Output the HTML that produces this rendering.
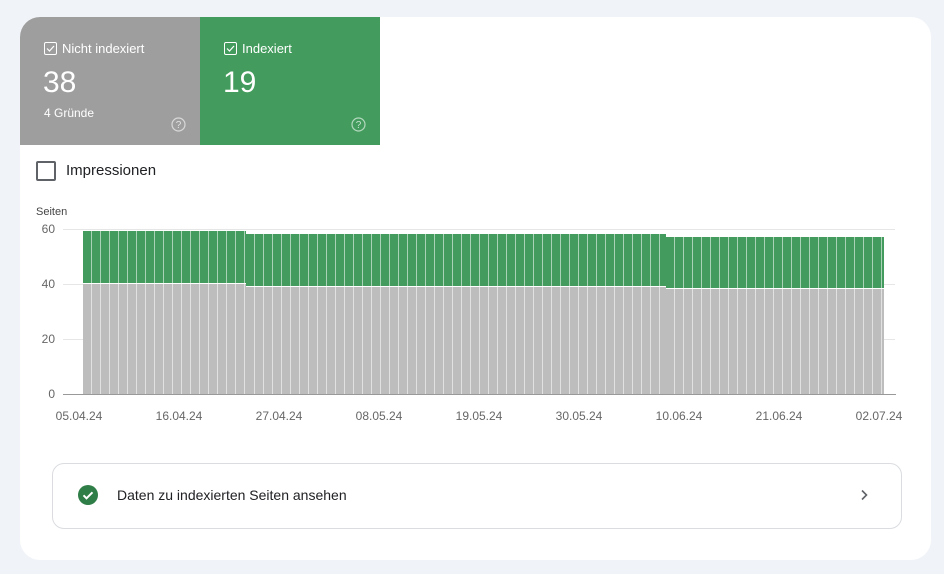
<!DOCTYPE html>
<html><head><style>
body{margin:0;width:944px;height:574px;background:#f0f3f8;font-family:"Liberation Sans",sans-serif;position:relative;overflow:hidden}
.card{position:absolute;left:20px;top:17px;width:911px;height:543px;background:#fff;border-radius:20px;overflow:hidden}
.a{position:absolute}
.t{color:#fff}
.grid{position:absolute;left:63px;width:832px;height:1px;background:#e6e6e6}
.yl{position:absolute;width:30px;left:25px;text-align:right;font-size:12px;color:#666}
.xl{position:absolute;top:409px;font-size:12px;color:#666;width:70px;text-align:center}
.seg{position:absolute;background:#bdbdbd}
.seg .g{position:absolute;left:0;right:0;top:0;background:#439c5d;border-bottom:1px solid #fff}
.seg .l{position:absolute;inset:0;background:repeating-linear-gradient(90deg,transparent 0,transparent 8px,rgba(255,255,255,.55) 8px,rgba(255,255,255,.55) 9px)}
</style></head><body>
<div class="card">
<div class="a" style="left:0;top:0;width:180px;height:128px;background:#9e9e9e"></div>
<div class="a" style="left:180px;top:0;width:180px;height:128px;background:#439c5d"></div>
</div>
<svg class="a" style="left:44px;top:42px" width="13" height="13" viewBox="0 0 13 13"><rect x="0.5" y="0.5" width="12" height="12" rx="1.5" fill="none" stroke="#fff"/><path d="M3 6.5l2.5 2.5 4.5-5" stroke="#fff" stroke-width="1.2" fill="none"/></svg>
<div class="a t" style="left:62px;top:41px;font-size:13px">Nicht indexiert</div>
<div class="a t" style="left:43px;top:66px;font-size:30px">38</div>
<div class="a t" style="left:44px;top:106px;font-size:12px">4 Gründe</div>
<svg class="a" style="left:171px;top:117px" width="15" height="15" viewBox="0 0 15 15"><circle cx="7.5" cy="7.5" r="6.5" fill="none" stroke="rgba(255,255,255,.6)" stroke-width="1.2"/><text x="7.5" y="11" font-size="10" text-anchor="middle" fill="rgba(255,255,255,.7)" font-family="Liberation Sans">?</text></svg>
<svg class="a" style="left:224px;top:42px" width="13" height="13" viewBox="0 0 13 13"><rect x="0.5" y="0.5" width="12" height="12" rx="1.5" fill="none" stroke="#fff"/><path d="M3 6.5l2.5 2.5 4.5-5" stroke="#fff" stroke-width="1.2" fill="none"/></svg>
<div class="a t" style="left:242px;top:41px;font-size:13px">Indexiert</div>
<div class="a t" style="left:223px;top:66px;font-size:30px">19</div>
<svg class="a" style="left:351px;top:117px" width="15" height="15" viewBox="0 0 15 15"><circle cx="7.5" cy="7.5" r="6.5" fill="none" stroke="rgba(255,255,255,.6)" stroke-width="1.2"/><text x="7.5" y="11" font-size="10" text-anchor="middle" fill="rgba(255,255,255,.7)" font-family="Liberation Sans">?</text></svg>
<div class="a" style="left:36px;top:161px;width:16px;height:16px;border:2px solid #5f6368;border-radius:2px"></div>
<div class="a" style="left:66px;top:162px;font-size:15px;color:#202124">Impressionen</div>
<div class="a" style="left:36px;top:206px;font-size:11px;color:#444">Seiten</div>
<div class="grid" style="top:229px"></div><div class="grid" style="top:284px"></div><div class="grid" style="top:339px"></div>
<div class="yl" style="top:222px">60</div><div class="yl" style="top:277px">40</div><div class="yl" style="top:332px">20</div><div class="yl" style="top:387px">0</div>
<div class="seg" style="left:83px;top:231px;width:163px;height:163px"><div class="g" style="height:52px"></div><div class="l"></div></div>
<div class="seg" style="left:246px;top:234px;width:420px;height:160px"><div class="g" style="height:52px"></div><div class="l"></div></div>
<div class="seg" style="left:666px;top:237px;width:218px;height:157px"><div class="g" style="height:51px"></div><div class="l"></div></div>
<div class="a" style="left:63px;top:394px;width:833px;height:1px;background:#999"></div>
<div class="xl" style="left:44px">05.04.24</div><div class="xl" style="left:144px">16.04.24</div><div class="xl" style="left:244px">27.04.24</div><div class="xl" style="left:344px">08.05.24</div><div class="xl" style="left:444px">19.05.24</div><div class="xl" style="left:544px">30.05.24</div><div class="xl" style="left:644px">10.06.24</div><div class="xl" style="left:744px">21.06.24</div><div class="xl" style="left:844px">02.07.24</div>
<div class="a" style="left:52px;top:463px;width:848px;height:64px;border:1px solid #dadce0;border-radius:12px"></div>
<svg class="a" style="left:78px;top:485px" width="20" height="20" viewBox="0 0 20 20"><circle cx="10" cy="10" r="10" fill="#2f7d47"/><path d="M5.5 10.3l3 3 6-6" stroke="#fff" stroke-width="2" fill="none"/></svg>
<div class="a" style="left:117px;top:487px;font-size:14px;color:#202124">Daten zu indexierten Seiten ansehen</div>
<svg class="a" style="left:857px;top:488px" width="14" height="14" viewBox="0 0 14 14"><path d="M5 2.5l4.5 4.5-4.5 4.5" stroke="#5f6368" stroke-width="1.6" fill="none"/></svg>
</body></html>
